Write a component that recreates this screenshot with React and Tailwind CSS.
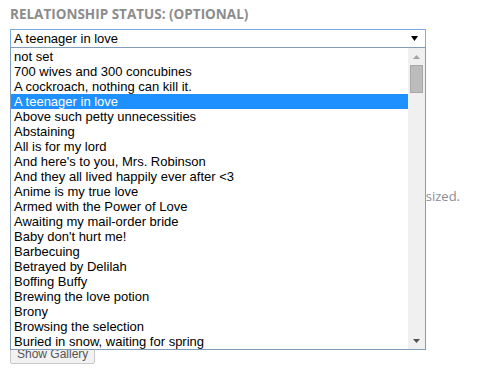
import React from "react";

const options = [
  "not set",
  "700 wives and 300 concubines",
  "A cockroach, nothing can kill it.",
  "A teenager in love",
  "Above such petty unnecessities",
  "Abstaining",
  "All is for my lord",
  "And here's to you, Mrs. Robinson",
  "And they all lived happily ever after <3",
  "Anime is my true love",
  "Armed with the Power of Love",
  "Awaiting my mail-order bride",
  "Baby don't hurt me!",
  "Barbecuing",
  "Betrayed by Delilah",
  "Boffing Buffy",
  "Brewing the love potion",
  "Brony",
  "Browsing the selection",
  "Buried in snow, waiting for spring",
];

const selected = "A teenager in love";

const Triangle = ({ down = true, color = "#000", w = 7, h = 4 }) => (
  <svg width={w} height={h} viewBox={`0 0 ${w} ${h}`}>
    <polygon
      points={down ? `0,0 ${w},0 ${w / 2},${h}` : `0,${h} ${w},${h} ${w / 2},0`}
      fill={color}
    />
  </svg>
);

export default function App() {
  return (
    <div className="relative w-[482px] h-[375px] overflow-hidden bg-white px-[10px] pt-[4px] font-['Open_Sans',sans-serif]">
      <label className="block h-[20px] text-[13.5px] font-bold leading-[20px] text-[#8c8c8c] uppercase">
        Relationship status: (optional)
      </label>

      <div className="mt-[5px] flex h-[19px] w-[416px] items-center justify-between border border-[#7eaae3] bg-white pl-[3px] pr-[7px] font-['Liberation_Sans',Arial,sans-serif] text-[13px] text-black">
        <span className="leading-[15px]">{selected}</span>
        <Triangle w={7} h={5} />
      </div>

      <p className="mt-[138px] w-[450px] text-right text-[13px] leading-[20px] text-[#8a8d99]">
        Uploaded images will be resized.
      </p>

      <button className="mt-[138px] h-[20px] rounded-[2px] border border-[#c8c8c8] bg-[#f2f2f2] px-[6px] font-['Liberation_Sans',Arial,sans-serif] text-[12px] leading-[18px] text-[#555]">
        Show Gallery
      </button>

      <div className="absolute left-[10px] top-[47px] flex h-[303px] w-[416px] border border-[#7f9db9] bg-white font-['Liberation_Sans',Arial,sans-serif] text-[13px] text-black">
        <ul className="flex-1 overflow-hidden pt-[1px]">
          {options.map((o) => (
            <li
              key={o}
              className={
                o === selected
                  ? "h-[15px] whitespace-nowrap bg-[#1e90ff] pl-[3px] leading-[15px] text-white"
                  : "h-[15px] whitespace-nowrap pl-[3px] leading-[15px]"
              }
            >
              {o}
            </li>
          ))}
        </ul>
        <div className="flex w-[17px] flex-col items-center bg-[#f0f0f0]">
          <div className="flex h-[17px] items-center justify-center">
            <Triangle down={false} color="#a3a3a3" w={7} h={4} />
          </div>
          <div className="h-[28px] w-[13px] border border-[#a8a8a8] bg-[#bcbcbc]" />
          <div className="flex-1" />
          <div className="flex h-[17px] items-center justify-center">
            <Triangle color="#505050" w={7} h={4} />
          </div>
        </div>
      </div>
    </div>
  );
}
